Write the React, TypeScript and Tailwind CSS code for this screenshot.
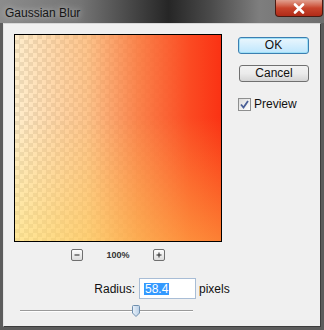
import React from 'react';

const font = { fontFamily: '"Liberation Sans", Arial, sans-serif' };

function ZoomBtn({ sign }: { sign: '-' | '+' }) {
  return (
    <div className="w-[12px] h-[12px] rounded-[2px] border border-[#6f6f6f] bg-gradient-to-b from-[#fdfdfd] to-[#dcdcdc] flex items-center justify-center">
      <svg width="8" height="8" viewBox="0 0 8 8">
        <path d="M1.5 4h5" stroke="#222" strokeWidth="1" />
        {sign === '+' && <path d="M4 1.5v5" stroke="#222" strokeWidth="1" />}
      </svg>
    </div>
  );
}

export default function App() {
  return (
    <div className="w-[324px] h-[330px] flex flex-col bg-[#5c5c5c] overflow-hidden text-[#111]" style={font}>
      {/* title bar */}
      <div className="h-[23px] flex items-start bg-[linear-gradient(to_right,#8c8c8c_0%,#747474_25%,#3a3a3a_45%,#262626_52%,#4a4a4a_65%,#7e7e7e_80%,#6e6e6e_100%)]">
        <span className="ml-[5px] mt-[6px] text-[12px] leading-[14px] text-[#151515] [text-shadow:0_0_6px_rgba(255,255,255,0.7)]">Gaussian Blur</span>
        <div className="ml-auto mr-[1px] w-[48px] h-[17px] rounded-b-[4px] border border-t-0 border-[#4a1a12] bg-gradient-to-b from-[#e0a090] via-[#c8442c] to-[#b02a18] flex items-center justify-center">
          <svg width="14" height="11" viewBox="0 0 14 11">
            <path d="M3 1.5 L11 9.5 M11 1.5 L3 9.5" stroke="#fff" strokeWidth="2.6" strokeLinecap="round" />
          </svg>
        </div>
      </div>

      {/* client area */}
      <div className="ml-[3px] w-[318px] h-[304px] border border-[#3c3c3c] border-t-[#d8d8d8] border-l-[#e4e4e4] bg-[#f0f0f0] flex flex-col">
        <div className="flex items-start">
          {/* preview */}
          <div className="ml-[10px] mt-[10px] w-[208px] h-[208px] border border-black bg-[repeating-conic-gradient(#e2e2e2_0%_25%,#ffffff_0%_50%)] bg-[length:9px_9px]">
            <div className="w-full h-full bg-[linear-gradient(to_right,rgba(255,205,110,0.35)_0%,rgba(252,170,90,0.7)_35%,rgba(250,120,60,0.92)_60%,#fb4a22_85%,#fa3214_100%)]">
              <div className="w-full h-full bg-[linear-gradient(to_top,rgba(255,222,90,0.45)_0%,rgba(255,222,90,0)_60%)]" />
            </div>
          </div>

          {/* buttons */}
          <div className="ml-[16px] mt-[13px] flex flex-col text-[12px]">
            <button className="w-[71px] h-[17px] rounded-[3px] border border-[#3c7fb1] bg-gradient-to-b from-[#eaf6fd] to-[#bee6fd] shadow-[inset_0_0_0_1px_#9fe0f7] leading-[15px]">OK</button>
            <button className="mt-[11px] ml-[1px] w-[70px] h-[17px] rounded-[3px] border border-[#707070] bg-gradient-to-b from-[#f2f2f2] via-[#ebebeb] to-[#d5d5d5] leading-[15px]">Cancel</button>
            <div className="mt-[15px] flex items-center">
              <div className="w-[13px] h-[13px] border border-[#8e8f8f] bg-gradient-to-br from-[#dcdcdc] to-[#ffffff] flex items-center justify-center">
                <svg width="11" height="11" viewBox="0 0 11 11">
                  <path d="M2 5.5 L4.5 8.5 L9 2" fill="none" stroke="#4a5f97" strokeWidth="1.8" />
                </svg>
              </div>
              <span className="ml-[3px] leading-[14px]">Preview</span>
            </div>
          </div>
        </div>

        {/* zoom */}
        <div className="ml-[10px] w-[208px] mt-[7px] flex items-center justify-center gap-[23px]">
          <ZoomBtn sign="-" />
          <span className="text-[9px] leading-[12px] font-bold text-[#333]">100%</span>
          <ZoomBtn sign="+" />
        </div>

        {/* radius */}
        <div className="mt-[17px] flex items-center text-[12px]">
          <span className="ml-[89px] w-[42px] text-right">Radius:</span>
          <div className="ml-[4px] w-[57px] h-[21px] border border-[#a8bdd6] bg-white flex items-center">
            <span className="ml-[4px] px-[1px] bg-[#3399ff] text-white leading-[12px]">58.4</span>
          </div>
          <span className="ml-[3px]">pixels</span>
        </div>

        {/* slider */}
        <div className="mt-[6px] ml-[16px] w-[173px] h-[12px] flex items-center">
          <div className="w-[112px] h-[2px] border-t border-[#9a9a9a] border-b-[#ffffff] border-b" />
          <svg width="8" height="12" viewBox="0 0 8 12" className="shrink-0">
            <defs>
              <linearGradient id="th" x1="0" y1="0" x2="1" y2="0">
                <stop offset="0" stopColor="#eaf2fa" />
                <stop offset="1" stopColor="#b9cfe6" />
              </linearGradient>
            </defs>
            <path d="M1.5 0.5 H6.5 Q7.5 0.5 7.5 1.5 V8 L4 11.5 L0.5 8 V1.5 Q0.5 0.5 1.5 0.5 Z" fill="url(#th)" stroke="#6f8fae" />
          </svg>
          <div className="flex-1 h-[2px] border-t border-[#9a9a9a] border-b-[#ffffff] border-b" />
        </div>
      </div>
    </div>
  );
}
